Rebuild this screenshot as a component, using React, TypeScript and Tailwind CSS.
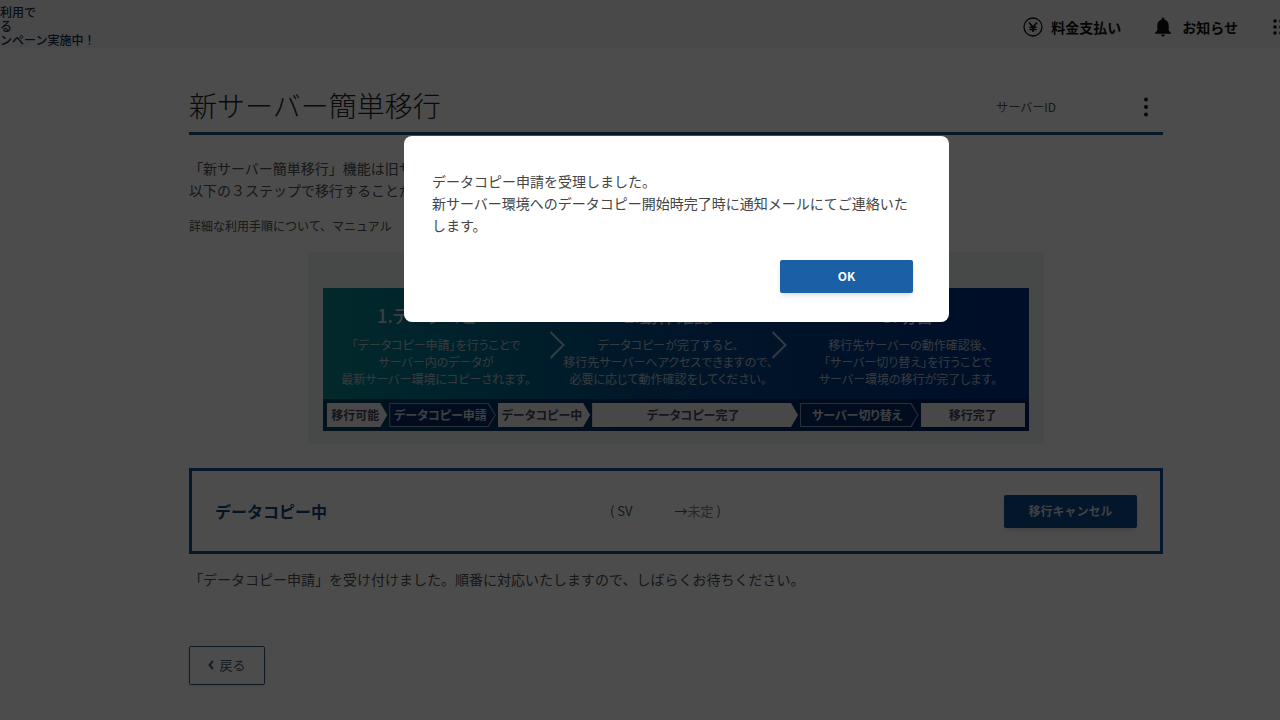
import { useState } from "react";
import clsx from "clsx";

type Step = {
  title: string;
  width: string;
  lines: string[];
};

type Phase = {
  label: string;
  width: string;
  outlined?: boolean;
  last?: boolean;
};

const steps: Step[] = [
  {
    title: "1.データコピー",
    width: "flex-[226]",
    lines: ["「データコピー申請」を行うことで", "サーバー内のデータが", "最新サーバー環境にコピーされます。"],
  },
  {
    title: "2.動作確認",
    width: "flex-[206]",
    lines: ["データコピーが完了すると、", "移行先サーバーへアクセスできますので、", "必要に応じて動作確認をしてください。"],
  },
  {
    title: "3.切替",
    width: "flex-[242]",
    lines: ["移行先サーバーの動作確認後、", "「サーバー切り替え」を行うことで", "サーバー環境の移行が完了します。"],
  },
];

const phases: Phase[] = [
  { label: "移行可能", width: "flex-[60]" },
  { label: "データコピー申請", width: "flex-[106]", outlined: true },
  { label: "データコピー中", width: "flex-[92]" },
  { label: "データコピー完了", width: "flex-[205]" },
  { label: "サーバー切り替え", width: "flex-[118]", outlined: true },
  { label: "移行完了", width: "flex-[104]", last: true },
];

const arrowShape = "[clip-path:polygon(0_0,calc(100%-7px)_0,100%_50%,calc(100%-7px)_100%,0_100%)]";

function YenIcon() {
  return (
    <svg viewBox="0 0 20 20" className="size-5" fill="none" stroke="currentColor" aria-hidden="true">
      <circle cx="10" cy="10" r="9" strokeWidth="1.3" />
      <path d="M6 5.500l4 4.500 4-4.500M10 10v5M6.500 10.200h7M6.500 12.500h7" strokeWidth="1.6" />
    </svg>
  );
}

function BellIcon() {
  return (
    <svg viewBox="0 0 18 20" className="h-5 w-[18px]" fill="currentColor" aria-hidden="true">
      <path d="M9 0.600a1.500 1.500 0 0 1 1.500 1.500v.7c2.700.7 4.200 2.900 4.200 5.700v5l2.200 2.200v1H1.100v-1l2.200-2.200v-5c0-2.800 1.500-5 4.200-5.700v-.7A1.500 1.500 0 0 1 9 .6z" />
      <path d="M7 17.600h4a2 2 0 0 1-4 0z" />
    </svg>
  );
}

function GridIcon() {
  return (
    <svg viewBox="0 0 18 18" className="size-[18px]" fill="currentColor" aria-hidden="true">
      {[3, 9, 15].map((y) =>
        [3, 9, 15].map((x) => <circle key={`${x}-${y}`} cx={x} cy={y} r="1.8" />)
      )}
    </svg>
  );
}

function Header() {
  return (
    <header className="flex h-12 items-start justify-between overflow-hidden bg-[#f3f3f3]">
      <p className="pt-[5px] text-xs leading-[14px] font-medium whitespace-nowrap text-[#14304d]">
        利用で
        <br />
        る
        <br />
        ンペーン実施中！
      </p>
      <nav className="-mr-[10px] flex h-[54px] shrink-0 items-center text-sm font-bold text-[#111]">
        <a href="#payment" className="mr-[33px] flex items-center gap-2">
          <YenIcon />
          料金支払い
        </a>
        <a href="#news" className="mr-[34px] flex items-center gap-[10px]">
          <BellIcon />
          お知らせ
        </a>
        <button type="button" aria-label="メニュー">
          <GridIcon />
        </button>
      </nav>
    </header>
  );
}

function StepArrow() {
  return (
    <svg
      viewBox="0 0 16 28"
      className="mt-[43px] h-7 w-4 shrink-0"
      fill="none"
      stroke="#ffffffb0"
      strokeWidth="2"
      aria-hidden="true"
    >
      <path d="M1.500 1l13 13-13 13" />
    </svg>
  );
}

function PhaseBar() {
  return (
    <ol className="flex h-8 gap-[2px] bg-[#00164a]/60 p-1 text-center text-xs leading-6 font-bold whitespace-nowrap">
      {phases.map((phase) => (
        <li key={phase.label} className={clsx("min-w-0", phase.width)}>
          {phase.outlined ? (
            <div className={clsx("h-6 bg-[#8f9db5] p-px", arrowShape)}>
              <div className={clsx("h-full bg-[#042c66] pr-1 leading-[22px] text-[#d0d4da]", arrowShape)}>
                {phase.label}
              </div>
            </div>
          ) : (
            <div className={clsx("h-6 bg-[#f2f2f2] text-[#4a4a55]", !phase.last && "pr-1", !phase.last && arrowShape)}>
              {phase.label}
            </div>
          )}
        </li>
      ))}
    </ol>
  );
}

function StepGuide() {
  return (
    <section className="mx-auto mt-4 w-full max-w-[736px] bg-[#eff1f2] px-[15px] pt-9 pb-[13px] [font-feature-settings:'palt']">
      <div className="bg-linear-to-r from-[#0a8a91] via-[#07478a] via-50% to-[#003084]">
        <div className="flex h-[111px] text-center text-xs leading-[17px] text-[#b8c4d2]">
          {steps.map((step, i) => (
            <div key={step.title} className="contents">
              {i > 0 && <StepArrow />}
              <div className={clsx("flex min-w-0 flex-col items-center whitespace-nowrap", step.width)}>
                <h2 className="mt-[15px] mb-[9px] text-lg leading-6 font-medium text-[#c8d2dc]">{step.title}</h2>
                {step.lines.map((line) => (
                  <p key={line}>{line}</p>
                ))}
              </div>
            </div>
          ))}
        </div>
        <PhaseBar />
      </div>
    </section>
  );
}

function CompleteDialog({ onClose }: { onClose: () => void }) {
  return (
    <div className="fixed inset-0 flex items-start justify-center bg-black/70 pt-[136px] pl-[73px]">
      <div
        role="dialog"
        aria-modal="true"
        aria-describedby="dialog-message"
        className="w-full max-w-[545px] rounded-lg bg-white pt-[34px] pr-9 pb-[29px] pl-7"
      >
        <p id="dialog-message" className="text-sm leading-[22px] text-[#444]">
          データコピー申請を受理しました。
          <br />
          新サーバー環境へのデータコピー開始時完了時に通知メールにてご連絡いたします。
        </p>
        <div className="mt-6 flex justify-end">
          <button
            type="button"
            onClick={onClose}
            className="h-[33px] w-[133px] rounded-xs bg-[#1a60a6] pb-px text-xs font-bold text-white shadow-md"
          >
            OK
          </button>
        </div>
      </div>
    </div>
  );
}

export default function App() {
  const [open, setOpen] = useState(true);

  return (
    <div className="h-screen overflow-hidden bg-white font-['Noto_Sans_CJK_JP',sans-serif] text-[#505050]">
      <Header />
      <main className="pr-[117px] pl-[189px]">
        <div className="flex h-[87px] items-end justify-between border-b-[3px] border-[#1a5289] pb-[6px]">
          <h1 className="text-[28px] leading-[42px] font-light text-[#222]">新サーバー簡単移行</h1>
          <div className="flex h-[42px] items-center pt-1 pr-[11px]">
            <span className="mr-[84px] text-xs">サーバーID</span>
            <button type="button" aria-label="サーバーメニュー">
              <svg viewBox="0 0 12 20" className="h-5 w-3" fill="#111" aria-hidden="true">
                <circle cx="6" cy="2.500" r="2" />
                <circle cx="6" cy="10" r="2" />
                <circle cx="6" cy="17.500" r="2" />
              </svg>
            </button>
          </div>
        </div>

        <p className="mt-[22px] text-sm leading-[22px]">
          「新サーバー簡単移行」機能は旧サーバー環境から新サーバー環境へ移行する機能です。
          <br />
          以下の３ステップで移行することができます。
        </p>
        <p className="mt-[15px] text-xs leading-5">
          詳細な利用手順について、マニュアル　をご確認ください。
        </p>

        <StepGuide />

        <section className="mt-6 flex h-[86px] items-center justify-between border-[3px] border-[#125290] px-[23px]">
          <h2 className="text-base font-bold text-[#16457c]">データコピー中</h2>
          <p className="flex gap-[42px] text-[13px]">
            <span>( SV</span>
            <span>
              →<span className="text-[#888]">未定</span> )
            </span>
          </p>
          <button
            type="button"
            className="h-[33px] w-[133px] rounded-xs bg-[#0c4a8c] text-xs font-bold text-[#d0d8e0] shadow-md"
          >
            移行キャンセル
          </button>
        </section>

        <p className="mt-[14px] text-sm leading-[22px]">
          「データコピー申請」を受け付けました。順番に対応いたしますので、しばらくお待ちください。
        </p>

        <button
          type="button"
          className="mt-14 flex h-[39px] w-[76px] items-center justify-center gap-[5px] rounded-xs border border-[#3c5a78] pb-px text-[13px] text-[#456075] shadow-sm"
        >
          <svg viewBox="0 0 6 10" className="h-[10px] w-[6px]" fill="none" stroke="currentColor" strokeWidth="2" aria-hidden="true">
            <path d="M5 1L1.500 5 5 9" />
          </svg>
          戻る
        </button>
      </main>
      {open && <CompleteDialog onClose={() => setOpen(false)} />}
    </div>
  );
}
